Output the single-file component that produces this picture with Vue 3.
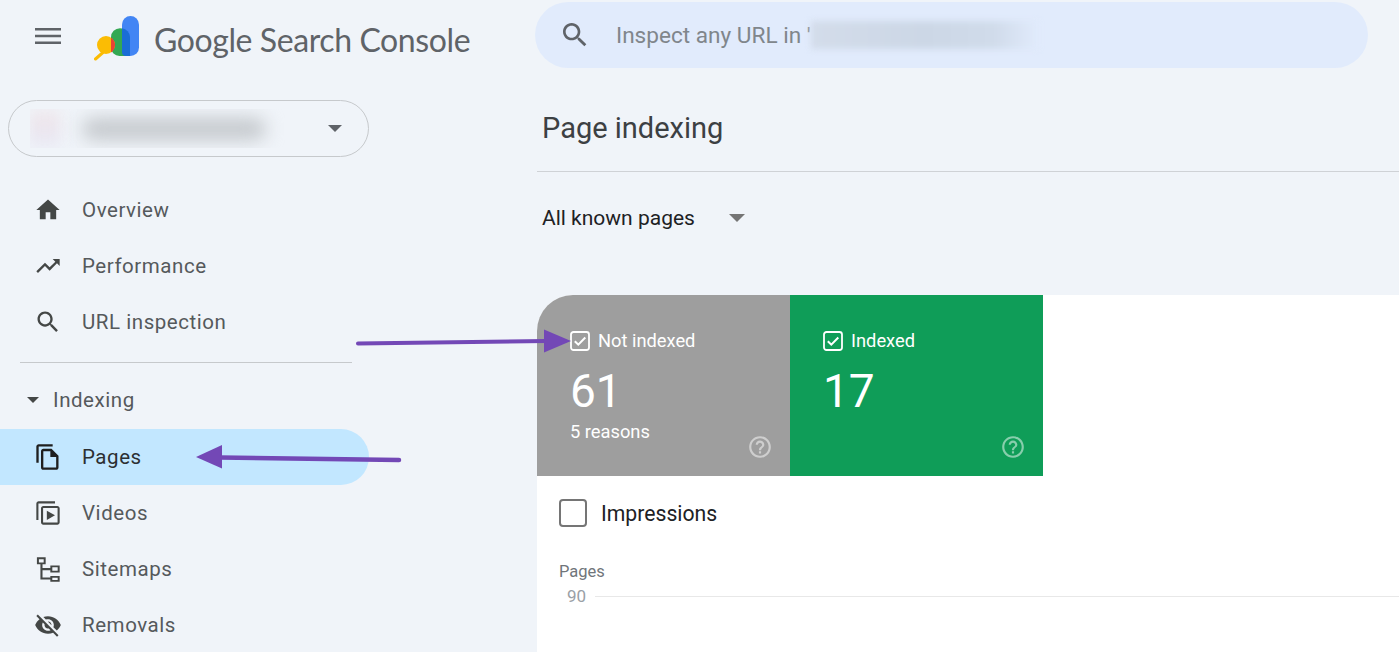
<script setup>
const topItems = [
  { label: 'Overview', d: 'M10 20v-6h4v6h5v-8h3L12 3 2 12h3v8z' },
  { label: 'Performance', d: 'M16 6l2.29 2.29-4.88 4.88-4-4L2 16.59 3.41 18l6-6 4 4 6.3-6.29L22 12V6z' },
  { label: 'URL inspection', d: 'M15.5 14h-.79l-.28-.27C15.41 12.59 16 11.11 16 9.5 16 5.91 13.09 3 9.5 3S3 5.91 3 9.5 5.91 16 9.5 16c1.61 0 3.09-.59 4.23-1.57l.27.28v.79l5 4.99L20.49 19l-4.99-5zm-6 0C7.01 14 5 11.99 5 9.5S7.01 5 9.5 5 14 7.01 14 9.5 11.99 14 9.5 14z' }
]
const indexItems = [
  { label: 'Pages', active: true, d: 'M16 1H4c-1.1 0-2 .9-2 2v14h2V3h12V1zm-1 4H8c-1.1 0-1.99.9-1.99 2L6 21c0 1.1.89 2 1.99 2H19c1.1 0 2-.9 2-2V11l-6-6zM8 21V7h6v5h5v9H8z' },
  { label: 'Videos', d: 'M4 2h14v1.800H3.800V18H2V4c0-1.100.9-2 2-2zm4 4h12c1.100 0 2 .9 2 2v12c0 1.100-.9 2-2 2H8c-1.100 0-2-.9-2-2V8c0-1.100.9-2 2-2zm-.2 1.800v12.400h12.400V7.800H7.800zM11 10v8l7-4z' },
  { label: 'Sitemaps', d: 'M2.500 2h7.500v6H7.300v3.200H14V9h8v6h-8v-2H7.300v6.200H14V18h8v5h-8v-2.100H5.500V8h-3V2zm1.700 1.600v2.800h4.100V3.600H4.200zm11.500 7v2.800h4.600v-2.800h-4.600zm0 9v1.800h4.600v-1.800h-4.600z' },
  { label: 'Removals', d: 'M12 7c2.76 0 5 2.24 5 5 0 .65-.13 1.26-.36 1.83l2.92 2.92c1.51-1.26 2.7-2.89 3.43-4.75-1.73-4.39-6-7.5-11-7.5-1.4 0-2.74.25-3.98.7l2.16 2.16C10.74 7.13 11.35 7 12 7zM2 4.27l2.28 2.28.46.46C3.08 8.3 1.78 10.02 1 12c1.73 4.39 6 7.5 11 7.5 1.55 0 3.03-.3 4.38-.84l.42.42L19.73 22 21 20.73 3.27 3 2 4.27zM7.53 9.8l1.55 1.55c-.05.21-.08.43-.08.65 0 1.66 1.34 3 3 3 .22 0 .44-.03.65-.08l1.55 1.55c-.67.33-1.41.53-2.2.53-2.76 0-5-2.24-5-5 0-.79.2-1.53.53-2.2zm4.31-.78l3.15 3.15.02-.16c0-1.66-1.34-3-3-3l-.17.01z' }
]
const cards = [
  { title: 'Not indexed', value: '61', sub: '5 reasons', tone: 'gray' },
  { title: 'Indexed', value: '17', sub: '', tone: 'green' }
]
const searchPath = 'M15.5 14h-.79l-.28-.27C15.41 12.59 16 11.11 16 9.5 16 5.91 13.09 3 9.5 3S3 5.91 3 9.5 5.91 16 9.5 16c1.61 0 3.09-.59 4.23-1.57l.27.28v.79l5 4.99L20.49 19l-4.99-5zm-6 0C7.01 14 5 11.99 5 9.5S7.01 5 9.5 5 14 7.01 14 9.5 11.99 14 9.5 14z'
</script>

<template>
  <div class="page">
    <aside class="sidebar">
      <div class="brand">
        <svg class="menu" viewBox="0 0 26 16"><path d="M0 0h26v2.400H0zM0 6.800h26v2.400H0zM0 13.600h26V16H0z" fill="#5f6368" /></svg>
        <svg class="logo" viewBox="0 0 46 46">
          <rect x="28" y="0" width="17" height="40" rx="8.500" fill="#4285f4" />
          <path d="M28 12.500a8.500 8.500 0 0 0-2-.3 9 9 0 0 0-9 9V31.500a8.500 8.500 0 0 0 8.500 8.500H36a8 8 0 0 1-8-8z" fill="#34a853" />
          <path d="M28 12.300a9 9 0 0 1 8 8.800V40h-4a4 4 0 0 1-4-4z" fill="#1a6dd6" />
          <path d="M1.500 43l8-7" stroke="#fbbc04" stroke-width="3" stroke-linecap="round" />
          <circle cx="12" cy="29" r="9" fill="#fbbc04" />
          <path d="M17 21.500a9 9 0 0 1 0 15z" fill="#ea4335" />
        </svg>
        <span class="wordmark">Google Search Console</span>
      </div>

      <div class="property">
        <div class="blur-mask">
          <span class="blur-fav"></span>
          <span class="blur-name"></span>
        </div>
        <svg class="caret" viewBox="0 0 14 7"><path d="M0 0h14L7 7z" fill="#5f6368" /></svg>
      </div>

      <nav class="nav">
        <a v-for="item in topItems" :key="item.label" class="row">
          <svg class="icon" viewBox="0 0 24 24"><path :d="item.d" /></svg>
          <span>{{ item.label }}</span>
        </a>
        <div class="rule"></div>
        <div class="section">
          <svg class="section-caret" viewBox="0 0 12 6"><path d="M0 0h12L6 6z" fill="#444746" /></svg>
          <span>Indexing</span>
        </div>
        <a v-for="item in indexItems" :key="item.label" class="row" :class="{ active: item.active }">
          <svg class="icon" viewBox="0 0 24 24"><path :d="item.d" /></svg>
          <span>{{ item.label }}</span>
        </a>
      </nav>
    </aside>

    <main class="main">
      <div class="search">
        <svg class="search-icon" viewBox="0 0 24 24"><path :d="searchPath" fill="#5f6368" /></svg>
        <span class="search-text">Inspect any URL in '</span>
        <span class="search-blur"></span>
      </div>

      <h1 class="title">Page indexing</h1>

      <div class="filter">
        <span>All known pages</span>
        <svg class="filter-caret" viewBox="0 0 16 8"><path d="M0 0h16L8 8z" fill="#757575" /></svg>
      </div>

      <section class="panel">
        <div class="cards">
          <div v-for="card in cards" :key="card.title" class="card" :class="card.tone">
            <div class="card-head">
              <svg class="check" viewBox="0 0 20 20">
                <rect x="1" y="1" width="18" height="18" rx="2.500" fill="none" stroke="#fff" stroke-width="1.800" />
                <path d="M4.800 10.200l3.500 3.500 7-7.200" fill="none" stroke="#fff" stroke-width="2" />
              </svg>
              <span>{{ card.title }}</span>
            </div>
            <div class="value">{{ card.value }}</div>
            <div class="sub">{{ card.sub }}</div>
            <svg class="help" viewBox="0 0 24 24"><path d="M11 18h2v-2h-2v2zm1-16C6.480 2 2 6.480 2 12s4.480 10 10 10 10-4.480 10-10S17.520 2 12 2zm0 18c-4.410 0-8-3.590-8-8s3.590-8 8-8 8 3.590 8 8-3.590 8-8 8zm0-14c-2.210 0-4 1.790-4 4h2c0-1.100.9-2 2-2s2 .9 2 2c0 2-3 1.750-3 5h2c0-2.250 3-2.500 3-5 0-2.210-1.790-4-4-4z" fill="#fff" /></svg>
          </div>
        </div>

        <div class="metric">
          <span class="box"></span>
          <span>Impressions</span>
        </div>
        <div class="axis-title">Pages</div>
        <div class="axis-row">
          <span class="tick">90</span>
          <span class="gridline"></span>
        </div>
      </section>
    </main>

    <svg class="arrows" viewBox="0 0 1399 652">
      <path d="M358 343.500L546 341" stroke="#7348b6" stroke-width="4" stroke-linecap="round" fill="none" />
      <path d="M544 329.500L571 341l-27 11.500z" fill="#7348b6" />
      <path d="M399 460L220 457.500" stroke="#7348b6" stroke-width="4.500" stroke-linecap="round" fill="none" />
      <path d="M222 445L196 457l26 11.500z" fill="#7348b6" />
    </svg>
  </div>
</template>

<style>
html, body { margin: 0; background: #f0f4f9; }
</style>

<style scoped>
.page {
  position: relative;
  display: flex;
  width: 1399px;
  height: 652px;
  overflow: hidden;
  background: #f0f4f9;
  font-family: Roboto, "Liberation Sans", sans-serif;
}
.sidebar { width: 537px; flex: none; }
.brand {
  display: flex;
  align-items: center;
  height: 72px;
  padding: 4px 0 0 35px;
  box-sizing: border-box;
}
.menu { width: 26px; height: 16px; margin-top: -4px; }
.logo { width: 46px; height: 46px; margin: 2px 0 0 33px; }
.wordmark {
  margin: 2px 0 0 14px;
  font-family: Lato, "Open Sans", sans-serif;
  font-size: 32px;
  letter-spacing: -0.4px;
  color: #5f6368;
  white-space: nowrap;
}
.property {
  display: flex;
  align-items: center;
  justify-content: space-between;
  width: 361px;
  height: 57px;
  box-sizing: border-box;
  margin: 28px 0 0 8px;
  padding: 0 26px 0 21px;
  border: 1px solid #c6c9cc;
  border-radius: 29px;
}
.blur-mask {
  display: flex;
  align-items: center;
  gap: 22px;
  width: 255px;
  height: 39px;
  overflow: hidden;
}
.blur-fav {
  width: 30px;
  height: 34px;
  background: linear-gradient(#efe3e7, #e7e7f4);
  filter: blur(8px);
}
.blur-name {
  width: 184px;
  height: 22px;
  background: #c4c8cc;
  border-radius: 11px;
  filter: blur(9px);
}
.caret { width: 14px; height: 7px; }
.nav { margin-top: 25px; }
.row {
  display: flex;
  align-items: center;
  gap: 20px;
  width: 369px;
  height: 56.200px;
  box-sizing: border-box;
  padding-left: 34px;
  border-radius: 0 28px 28px 0;
  font-size: 20.500px;
  letter-spacing: 0.550px;
  font-weight: 400;
  color: #55595c;
}
.row.active { background: #c2e7ff; color: #2c2f32; }
.icon { width: 28px; height: 28px; flex: none; fill: #444746; }
.row.active .icon { fill: #1f1f1f; }
.rule {
  width: 332px;
  height: 1px;
  margin: 11px 0 0 20px;
  background: #c6c9cc;
}
.section {
  display: flex;
  align-items: center;
  gap: 14px;
  height: 57px;
  padding: 0 0 0 27px;
  margin-top: 9px;
  font-size: 20.500px;
  letter-spacing: 0.550px;
  font-weight: 400;
  color: #55595c;
}
.section-caret { width: 12px; height: 6px; }
.main { flex: 1; min-width: 0; position: relative; }
.search {
  display: flex;
  align-items: center;
  width: 833px;
  height: 66px;
  margin: 2px 0 0 -2px;
  padding-left: 24px;
  box-sizing: border-box;
  background: #e1ebfc;
  border-radius: 33px;
}
.search-icon { width: 32px; height: 32px; flex: none; }
.search-text {
  margin-left: 25px;
  font-size: 22.600px;
  color: #80868b;
  white-space: pre;
}
.search-blur {
  width: 228px;
  height: 28px;
  background: linear-gradient(90deg, #d3dcea, #ccd7e6 50%, #d0dbea 80%, #e1ebfc);
  filter: blur(3px);
}
.title {
  margin: 0;
  height: 103px;
  line-height: 120px;
  padding-left: 5px;
  font-size: 29px;
  font-weight: 400;
  color: #3c4043;
  border-bottom: 1px solid #cfd2d6;
}
.filter {
  display: flex;
  align-items: center;
  gap: 34px;
  height: 92px;
  padding: 0 0 1px 5px;
  box-sizing: border-box;
  font-size: 21px;
  color: #202124;
}
.filter-caret { width: 16px; height: 8px; margin-top: 1px; }
.panel {
  height: 357px;
  margin-top: 31px;
  background: #fff;
  border-top-left-radius: 36px;
}
.cards { display: flex; }
.card {
  position: relative;
  width: 253px;
  height: 181px;
  padding: 32px 0 0 33px;
  box-sizing: border-box;
  color: #fff;
}
.card.gray { background: #9e9e9e; border-top-left-radius: 36px; }
.card.green { background: #0f9d58; }
.card-head { display: flex; align-items: center; gap: 8px; height: 26px; font-size: 18.300px; }
.check { width: 20px; height: 20px; margin-top: 1px; }
.value { margin-top: 11px; height: 54px; line-height: 54px; font-size: 46px; }
.sub { margin-top: 2px; height: 24px; line-height: 24px; font-size: 18.300px; }
.help { position: absolute; right: 17px; bottom: 16px; width: 26px; height: 26px; opacity: 0.5; }
.metric {
  display: flex;
  align-items: center;
  gap: 14px;
  height: 28px;
  margin: 23px 0 0 22px;
  font-size: 21.200px;
  color: #202124;
}
.box {
  width: 28px;
  height: 28px;
  box-sizing: border-box;
  border: 2.500px solid #757575;
  border-radius: 4px;
}
.axis-title {
  margin: 35px 0 0 22px;
  height: 20px;
  line-height: 20px;
  font-size: 16.500px;
  color: #70757a;
}
.axis-row { display: flex; align-items: center; height: 20px; margin: 4px 0 0 30px; }
.tick { width: 28px; margin-top: -1px; font-size: 17px; color: #9aa0a6; }
.gridline { flex: 1; height: 1px; background: #e8e8e8; }
.arrows { position: absolute; inset: 0; width: 1399px; height: 652px; pointer-events: none; }
</style>
